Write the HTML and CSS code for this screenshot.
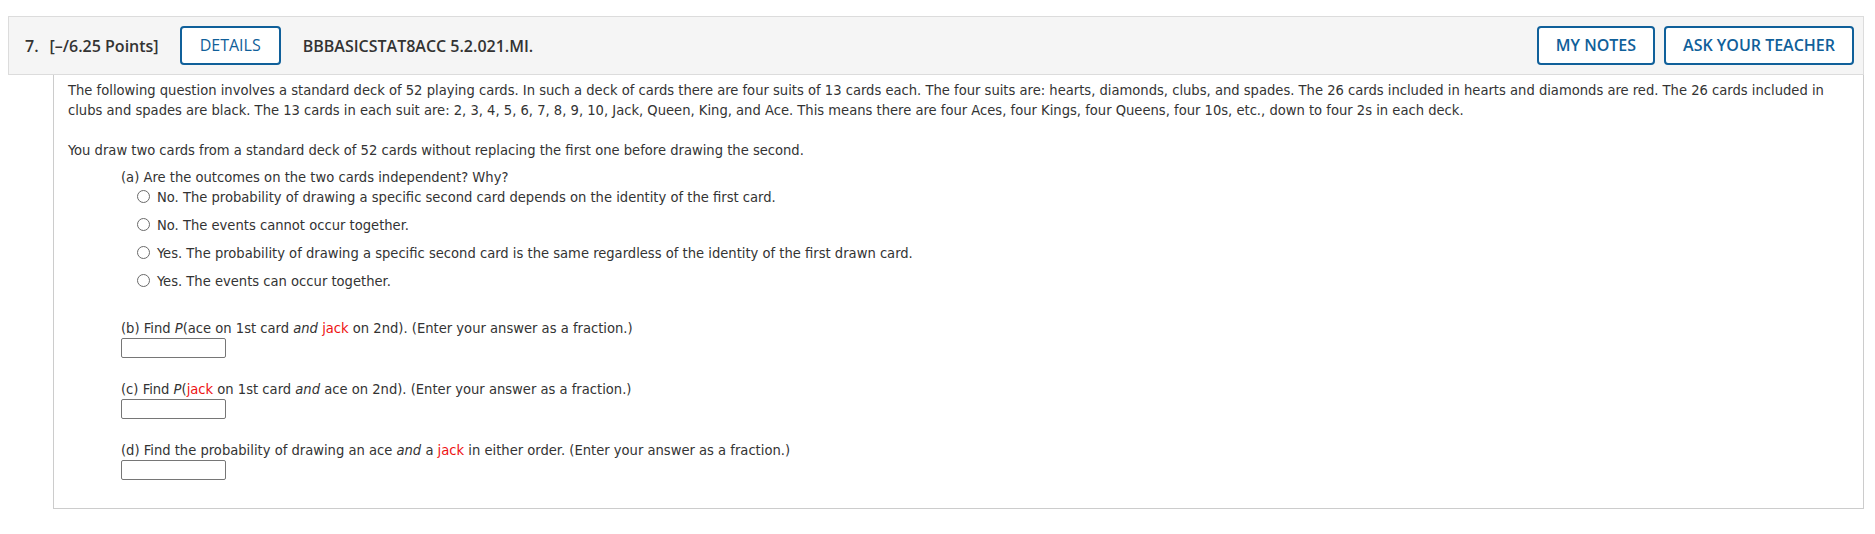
FILE: index.html
```html
<!DOCTYPE html>
<html>
<head>
<meta charset="utf-8">
<link rel="stylesheet" href="styles.css">
</head>
<body>
<div class="page">
  <div class="qheader">
    <span class="qnum">7.</span>
    <span class="qpoints">[–/6.25 Points]</span>
    <button class="btn btn-details">DETAILS</button>
    <span class="qcode">BBBASICSTAT8ACC 5.2.021.MI.</span>
    <span class="spacer"></span>
    <button class="btn btn-strong">MY NOTES</button>
    <button class="btn btn-strong">ASK YOUR TEACHER</button>
  </div>
  <div class="qbody">
    <p class="intro">The following question involves a standard deck of 52 playing cards. In such a deck of cards there are four suits of 13 cards each. The four suits are: hearts, diamonds, clubs, and spades. The 26 cards included in hearts and diamonds are red. The 26 cards included in clubs and spades are black. The 13 cards in each suit are: 2, 3, 4, 5, 6, 7, 8, 9, 10, Jack, Queen, King, and Ace. This means there are four Aces, four Kings, four Queens, four 10s, etc., down to four 2s in each deck.</p>
    <p class="intro2">You draw two cards from a standard deck of 52 cards without replacing the first one before drawing the second.</p>
    <div class="part">
      <div class="prompt pa">(a) Are the outcomes on the two cards independent? Why?</div>
      <div class="options">
        <div class="option"><span class="radio"></span>No. The probability of drawing a specific second card depends on the identity of the first card.</div>
        <div class="option"><span class="radio"></span>No. The events cannot occur together.</div>
        <div class="option"><span class="radio"></span>Yes. The probability of drawing a specific second card is the same regardless of the identity of the first drawn card.</div>
        <div class="option"><span class="radio"></span>Yes. The events can occur together.</div>
      </div>
      <div class="prompt pb">(b) Find <i>P</i>(ace on 1st card <i>and</i> <span class="red">jack</span> on 2nd). (Enter your answer as a fraction.)</div>
      <input class="answer" type="text">
      <div class="prompt pc">(c) Find <i>P</i>(<span class="red">jack</span> on 1st card <i>and</i> ace on 2nd). (Enter your answer as a fraction.)</div>
      <input class="answer" type="text">
      <div class="prompt pc">(d) Find the probability of drawing an ace <i>and</i> a <span class="red">jack</span> in either order. (Enter your answer as a fraction.)</div>
      <input class="answer" type="text">
    </div>
  </div>
</div>
</body>
</html>
```
FILE: styles.css
```css
html, body {
  margin: 0;
  padding: 0;
  background: #ffffff;
}

.page {
  padding: 16px 11px 0 8px;
}

.qheader {
  display: flex;
  align-items: center;
  height: 57px;
  border: 1px solid #dcdcdc;
  background: #f5f5f5;
  padding: 0 9px 0 16px;
  font-family: "Open Sans", sans-serif;
  color: #333333;
}

.qnum {
  font-weight: 600;
  font-size: 16px;
  margin-right: 11px;
}

.qpoints {
  font-weight: 600;
  font-size: 16px;
  margin-right: 21px;
}

.qcode {
  font-weight: 600;
  font-size: 16px;
  margin-left: 22px;
}

.spacer {
  flex: 1;
}

.btn {
  box-sizing: border-box;
  height: 39px;
  padding: 0 17px;
  border: 2px solid #10609a;
  border-radius: 4px;
  background: #ffffff;
  color: #10609a;
  font-family: "Open Sans", sans-serif;
  font-size: 16px;
  line-height: 35px;
  cursor: pointer;
}

.btn-details {
  font-weight: 400;
  padding: 0 18px;
}

.btn-strong {
  font-weight: 600;
  margin-left: 9px;
}

.qbody {
  margin-left: 45px;
  border: 1px solid #cccccc;
  border-top: none;
  padding: 5px 14px 28px 14px;
  font-family: "DejaVu Sans Condensed", "DejaVu Sans", sans-serif;
  font-stretch: condensed;
  font-size: 14.6px;
  line-height: 20px;
  color: #333333;
}

.intro {
  margin: 0 0 20px 0;
}

.intro2 {
  margin: 0;
}

.part {
  margin-left: 53px;
}

.prompt {
  line-height: 20px;
}

.pa {
  margin-top: 7px;
}

.options {
  padding-left: 16px;
  padding-bottom: 1px;
}

.option {
  display: flex;
  align-items: center;
  line-height: 20px;
  margin-bottom: 8px;
}

.pb {
  margin-top: 18px;
}

.pc {
  margin-top: 21px;
}

.radio {
  box-sizing: border-box;
  width: 13px;
  height: 13px;
  border: 1px solid #6a6a6a;
  border-radius: 50%;
  margin-right: 7px;
  margin-top: -1px;
  flex: none;
}

.red {
  color: #ee1111;
}

.answer {
  display: block;
  box-sizing: border-box;
  width: 105px;
  height: 20px;
  margin: 0;
  border: 1px solid #767676;
  border-radius: 2px;
  padding: 0 3px;
  background: #ffffff;
}
```
